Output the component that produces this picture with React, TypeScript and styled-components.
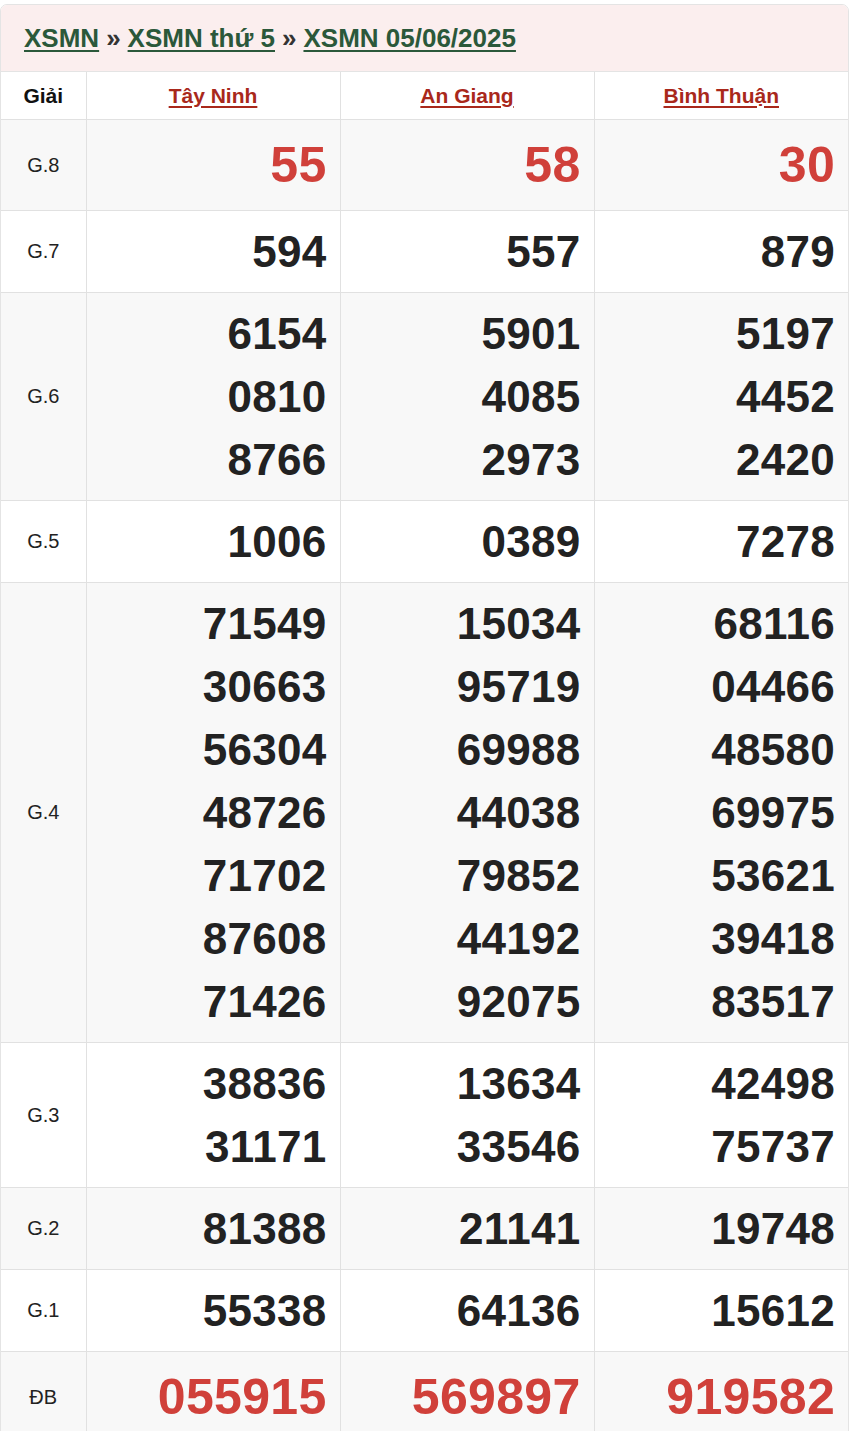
import React from 'react';
import styled, { createGlobalStyle } from 'styled-components';

const GlobalStyle = createGlobalStyle`
  body {
    margin: 0;
    background: #fff;
    font-family: 'Liberation Sans', Arial, sans-serif;
  }
`;

const Box = styled.div`
  width: 847px;
  margin-top: 4px;
  border: 1px solid #e4e4e4;
  border-radius: 7px;
  overflow: hidden;
`;

const Crumbs = styled.div`
  display: flex;
  align-items: center;
  gap: 7px;
  padding: 18px 23px 18px;
  background: #fbeeee;
  border-bottom: 1px solid #e4e4e4;
  font-size: 26px;
  font-weight: bold;
  line-height: 30px;
`;

const Crumb = styled.a`
  color: #2b583a;
  text-decoration: underline;
  text-underline-offset: 3px;
`;

const Sep = styled.span`
  color: #333;
`;

const Table = styled.table`
  width: 100%;
  border-collapse: collapse;
  table-layout: fixed;
`;

const HeadCell = styled.th`
  padding: 9px 4px;
  font-size: 21px;
  line-height: 29px;
  font-weight: bold;
  text-align: center;
  color: #111;
  border-left: 1px solid #e1e1e1;
  &:first-child {
    border-left: 0;
  }
`;

const Province = styled.a`
  color: #a9281b;
  text-decoration: underline;
  text-underline-offset: 3px;
`;

const Row = styled.tr<{ $alt: boolean }>`
  background: ${(p) => (p.$alt ? '#f8f8f8' : '#fff')};
  border-top: 1px solid #e1e1e1;
`;

const Label = styled.td`
  text-align: center;
  font-size: 20px;
  color: #222;
  vertical-align: middle;
`;

const Cell = styled.td<{ $big: boolean; $red: boolean }>`
  padding: 9px 13px 9px 4px;
  border-left: 1px solid #e1e1e1;
  text-align: right;
  vertical-align: middle;
  font-weight: bold;
  font-size: ${(p) => (p.$big ? '50px' : '44px')};
  line-height: ${(p) => (p.$big ? '72px' : '63px')};
  color: ${(p) => (p.$red ? '#d0403a' : '#222')};
`;

const Num = styled.div`
  letter-spacing: 0.3px;
`;

type Prize = { name: string; big?: boolean; red?: boolean; values: string[][] };

const provinces = ['Tây Ninh', 'An Giang', 'Bình Thuận'];

const prizes: Prize[] = [
  { name: 'G.8', big: true, red: true, values: [['55'], ['58'], ['30']] },
  { name: 'G.7', values: [['594'], ['557'], ['879']] },
  {
    name: 'G.6',
    values: [
      ['6154', '0810', '8766'],
      ['5901', '4085', '2973'],
      ['5197', '4452', '2420'],
    ],
  },
  { name: 'G.5', values: [['1006'], ['0389'], ['7278']] },
  {
    name: 'G.4',
    values: [
      ['71549', '30663', '56304', '48726', '71702', '87608', '71426'],
      ['15034', '95719', '69988', '44038', '79852', '44192', '92075'],
      ['68116', '04466', '48580', '69975', '53621', '39418', '83517'],
    ],
  },
  {
    name: 'G.3',
    values: [
      ['38836', '31171'],
      ['13634', '33546'],
      ['42498', '75737'],
    ],
  },
  { name: 'G.2', values: [['81388'], ['21141'], ['19748']] },
  { name: 'G.1', values: [['55338'], ['64136'], ['15612']] },
  { name: 'ĐB', big: true, red: true, values: [['055915'], ['569897'], ['919582']] },
];

export default function App() {
  return (
    <>
      <GlobalStyle />
      <Box>
        <Crumbs>
          <Crumb>XSMN</Crumb>
          <Sep>»</Sep>
          <Crumb>XSMN thứ 5</Crumb>
          <Sep>»</Sep>
          <Crumb>XSMN 05/06/2025</Crumb>
        </Crumbs>
        <Table>
          <colgroup>
            <col style={{ width: 85 }} />
            <col />
            <col />
            <col />
          </colgroup>
          <thead>
            <tr>
              <HeadCell>Giải</HeadCell>
              {provinces.map((p) => (
                <HeadCell key={p}>
                  <Province>{p}</Province>
                </HeadCell>
              ))}
            </tr>
          </thead>
          <tbody>
            {prizes.map((prize, i) => (
              <Row key={prize.name} $alt={i % 2 === 0}>
                <Label>{prize.name}</Label>
                {prize.values.map((col, j) => (
                  <Cell key={j} $big={!!prize.big} $red={!!prize.red}>
                    {col.map((v, k) => (
                      <Num key={k}>{v}</Num>
                    ))}
                  </Cell>
                ))}
              </Row>
            ))}
          </tbody>
        </Table>
      </Box>
    </>
  );
}
